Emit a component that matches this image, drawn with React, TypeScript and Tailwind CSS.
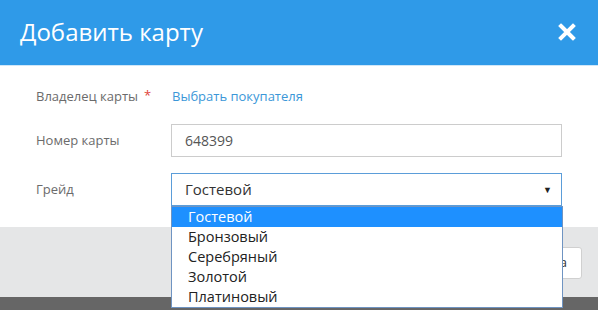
import { useState } from 'react'

const grades = ['Гостевой', 'Бронзовый', 'Серебряный', 'Золотой', 'Платиновый']

export default function App() {
  const [grade, setGrade] = useState('Гостевой')
  const [open, setOpen] = useState(true)

  return (
    <div className="w-[598px] h-[310px] overflow-hidden bg-[#666666] font-['Open_Sans',sans-serif]">
      <div className="bg-white">
        {/* Header */}
        <div className="h-[65px] bg-[#2f9ae8] flex items-center justify-between pl-5 pr-[22px] border-b border-[#cfe7f9] box-content">
          <h2 className="text-[24px] text-white leading-none -mt-[2px]">Добавить карту</h2>
          <button className="text-white -mt-[2px]">
            <svg width="18" height="18" viewBox="0 0 18 18">
              <path d="M3 3 L15 15 M15 3 L3 15" stroke="white" strokeWidth="4" strokeLinecap="square" />
            </svg>
          </button>
        </div>

        {/* Body */}
        <div className="h-[161px] pl-[36px] pr-[36px] pt-[20px]">
          <div className="flex items-center h-[22px] text-[13px]">
            <span className="w-[108px] text-[#6b6b6b]">Владелец карты</span>
            <span className="text-[#e0443a] w-[28px] -mt-[2px]">*</span>
            <a className="text-[#3b97d8] cursor-pointer">Выбрать покупателя</a>
          </div>
          <div className="flex items-center mt-[16px] text-[13px]">
            <span className="w-[135px] text-[#6b6b6b]">Номер карты</span>
            <input
              defaultValue="648399"
              className="w-[391px] h-[33px] border border-[#cccccc] px-[13px] text-[14px] text-[#555] outline-none"
            />
          </div>
          <div className="flex items-center mt-[16px] text-[13px]">
            <span className="w-[135px] text-[#6b6b6b]">Грейд</span>
            <div className="relative">
              <button
                onClick={() => setOpen(o => !o)}
                className="w-[391px] h-[33px] border border-[#5b9dd9] px-[13px] text-[15px] text-[#333] flex items-center justify-between text-left"
              >
                <span>{grade}</span>
                <span className="text-[9px] text-[#222] -mr-[4px]">▼</span>
              </button>
              {open && (
                <div className="absolute left-0 top-[33px] w-[392px] bg-white border border-[#6f94c2] z-10">
                  {grades.map(g => (
                    <div
                      key={g}
                      onClick={() => { setGrade(g); setOpen(false) }}
                      className={`h-[20px] leading-[20px] pl-[16px] text-[14.5px] ${g === grade ? 'bg-[#1e90ff] text-white' : 'text-[#222]'}`}
                    >
                      {g}
                    </div>
                  ))}
                </div>
              )}
            </div>
          </div>
        </div>

        {/* Footer */}
        <div className="h-[70px] bg-[#e5e6e7] flex items-center justify-end pr-[16px] pt-[2px]">
          <button className="h-[32px] px-[14px] bg-white border border-[#d0d0d0] rounded-[3px] text-[13px] text-[#333]">Отмена</button>
        </div>
      </div>
    </div>
  )
}
